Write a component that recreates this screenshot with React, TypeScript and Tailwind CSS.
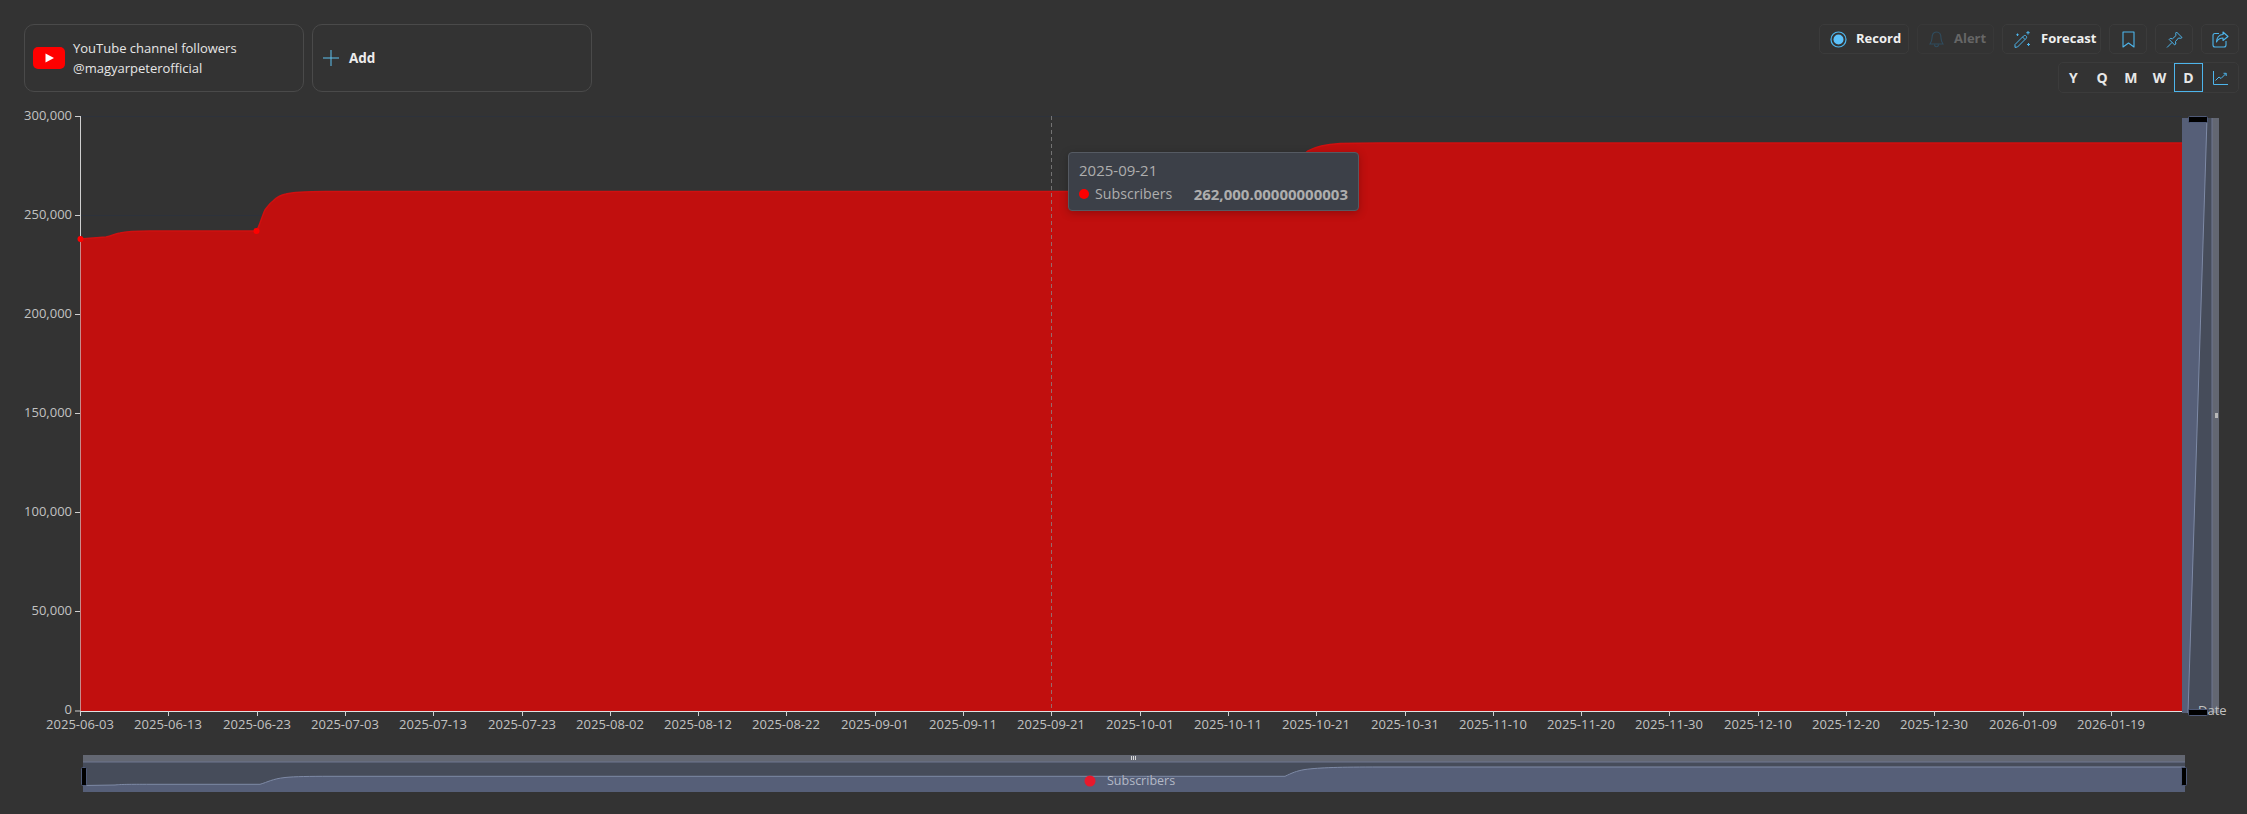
import React from "react";

const FONT = "font-['Open_Sans','Noto_Sans',sans-serif]";
const ticks = ["2025-06-03","2025-06-13","2025-06-23","2025-07-03","2025-07-13","2025-07-23","2025-08-02","2025-08-12","2025-08-22","2025-09-01","2025-09-11","2025-09-21","2025-10-01","2025-10-11","2025-10-21","2025-10-31","2025-11-10","2025-11-20","2025-11-30","2025-12-10","2025-12-20","2025-12-30","2026-01-09","2026-01-19"];
const yTicks: [string, number][] = [["300,000",116],["250,000",215],["200,000",314],["150,000",413],["100,000",512],["50,000",611],["0",710.5]];

const AREA = "M80 239 L106 237 C112 236 114 234 120 233 C126 231.5 134 231 150 231 L256.5 231 C260 225 262 216 265 210 C268 206 270 203 273 201 C277 197 281 195 286 194 C293 192 305 191.4 325 191.4 L1285 191.4 C1290 184 1293 175 1297 168 C1300 160 1303 154 1308 151 C1315 147 1325 144.5 1340 143.6 C1350 143.2 1365 143 1380 143 L2182 143";

function IconBtn({ w, children }: { w: string; children: React.ReactNode }) {
  return <div className={`flex h-[30px] items-center justify-center rounded-[5px] border border-[#3b3b3b] ${w}`}>{children}</div>;
}

function Period({ label, active }: { label: string; active?: boolean }) {
  return <div className={`flex h-[29px] w-[28.75px] items-center justify-center text-[14px] font-bold text-[#e8e8e8] ${active ? "border border-[#4db5ec]" : ""}`}>{label}</div>;
}

export default function App() {
  return (
    <div className={`relative h-[814px] w-[2247px] overflow-hidden bg-[#333333] ${FONT}`}>
      <div className="flex h-[96px] items-start justify-between pl-[24px] pr-[8px] pt-[24px]">
        <div className="flex gap-[8px]">
          <div className="flex h-[68px] w-[280px] items-center gap-[8px] rounded-[10px] border border-[#4a4a4a] pl-[8px]">
            <svg width="32" height="22" viewBox="0 0 32 22"><rect width="32" height="22" rx="5" fill="#ff0000" /><path d="M12.5 6.5 L21 11 L12.5 15.5 Z" fill="#fff" /></svg>
            <div className="text-[13px] leading-[20px] text-[#e6e6e6]">
              <div>YouTube channel followers</div>
              <div>@magyarpeterofficial</div>
            </div>
          </div>
          <div className="flex h-[68px] w-[280px] items-center gap-[10px] rounded-[10px] border border-[#4a4a4a] pl-[10px]">
            <svg width="16" height="16" viewBox="0 0 16 16" stroke="#5fc2f0" strokeWidth="1"><path d="M8 0 V16 M0 8 H16" /></svg>
            <span className="text-[13.5px] font-bold leading-[18px] text-[#ececec]">Add</span>
          </div>
        </div>
        <div className="flex flex-col items-end gap-[8px]">
          <div className="flex gap-[8px]">
            <div className="flex h-[30px] w-[90px] items-center gap-[9px] rounded-[5px] border border-[#3b3b3b] pl-[10px] text-[13px] font-bold text-[#f0f0f0]">
              <svg width="17" height="17" viewBox="0 0 17 17"><circle cx="8.5" cy="8.5" r="7.5" fill="none" stroke="#4db5ec" strokeWidth="1.2" /><circle cx="8.5" cy="8.5" r="5" fill="#5cc2fb" /></svg>
              Record
            </div>
            <div className="flex h-[30px] w-[77px] items-center gap-[10px] rounded-[5px] border border-[#383838] pl-[11px] text-[13px] font-bold text-[#666666]">
              <svg width="15" height="17" viewBox="0 0 15 17" fill="none" stroke="#2f4c5e" strokeWidth="1.1"><path d="M7.5 1 C4 1 3 4 3 7 C3 10 2 11.5 1 13 H14 C13 11.5 12 10 12 7 C12 4 11 1 7.5 1 Z" /><path d="M5.5 13.5 C5.5 16.5 9.5 16.5 9.5 13.5" /></svg>
              Alert
            </div>
            <div className="flex h-[30px] w-[99px] items-center gap-[10px] rounded-[5px] border border-[#3b3b3b] pl-[11px] text-[13px] font-bold text-[#f0f0f0]">
              <svg width="17" height="17" viewBox="0 0 17 17" fill="none" stroke="#4db5ec" strokeWidth="1"><path d="M1 13.5 L9.5 5 C10.3 4.3 11.6 4.3 12.2 5 C12.9 5.7 12.8 6.8 12 7.5 L3.5 16 L1 16.4 Z" /><path d="M8.5 6 L11 8.5" /><path d="M14 0 V3.5 M12.3 1.7 H15.7 M3.5 2.5 V5 M2.3 3.7 H4.7 M14.5 12 V15 M13 13.5 H16" /></svg>
              Forecast
            </div>
            <IconBtn w="w-[38px]">
              <svg width="13" height="17" viewBox="0 0 13 17" fill="none" stroke="#4db5ec" strokeWidth="1.1"><path d="M1 1 H12 V16 L6.5 12 L1 16 Z" strokeLinejoin="round" /></svg>
            </IconBtn>
            <IconBtn w="w-[38px]">
              <svg width="17" height="17" viewBox="0 0 17 17" fill="none" stroke="#4db5ec" strokeWidth="1"><path d="M10.5 1 L16 6.5 L14.8 7.3 L12.5 7 L9.5 10.5 L9.8 13 L8.7 14 L3.2 8.5 L4.2 7.4 L6.5 7.8 L10 4.5 L9.7 2.2 Z" strokeLinejoin="round" /><path d="M6 11.5 L1 16.5" /></svg>
            </IconBtn>
            <IconBtn w="w-[38px]">
              <svg width="17" height="17" viewBox="0 0 17 17" fill="none" stroke="#4db5ec" strokeWidth="1.1"><path d="M7 2.5 H3 C1.8 2.5 1 3.3 1 4.5 V14 C1 15.2 1.8 16 3 16 H12 C13.2 16 14 15.2 14 14 V10" /><path d="M11 1 L16 5.5 L11 9.5 V7 C8 7 6 8 4.5 11 C4.5 7 7 3.5 11 3.5 Z" strokeLinejoin="round" /></svg>
            </IconBtn>
          </div>
          <div className="flex h-[31px] w-[181px] items-center rounded-[5px] border border-[#3b3b3b]">
            <Period label="Y" />
            <Period label="Q" />
            <Period label="M" />
            <Period label="W" />
            <Period label="D" active />
            <div className="flex flex-1 items-center justify-center">
              <svg width="15" height="14" viewBox="0 0 15 14" fill="none" stroke="#4db5ec" strokeWidth="1"><path d="M0.5 0 V13.5 H15" /><path d="M2.5 9.5 L6 6 L8 7.5 L13 2.5 M10.5 2.3 H13.2 V5" /></svg>
            </div>
          </div>
        </div>
      </div>

      <svg className="block" width="2247" height="718" viewBox="0 96 2247 718">
        <g stroke="#2d323b" strokeWidth="1">
          <path d="M80 116.5 H2182" />
          <path d="M80 215.5 H2182" />
        </g>
        <path d={`${AREA} L2182 711 L80 711 Z`} fill="#c10f0e" />
        <path d={AREA} fill="none" stroke="#d01010" strokeWidth="1.5" />
        <path d="M80.5 116 V239" stroke="#d0d0d0" strokeWidth="1" />
        <path d="M80.5 239 V711" stroke="#c88a8a" strokeWidth="1" />
        <path d="M75 116.5 H80 M75 215.5 H80 M75 314.5 H80 M75 413.5 H80 M75 512.5 H80 M75 611.5 H80 M75 711 H80" stroke="#d0d0d0" strokeWidth="1" />
        <path d="M80 711.5 H2182" stroke="#e0e0e0" strokeWidth="1" />
        <circle cx="80.5" cy="239" r="3" fill="#ff0000" />
        <circle cx="256.5" cy="231" r="3" fill="#ff0000" />
        <path d="M1051.5 116 V711" stroke="#8a8a8a" strokeOpacity="0.75" strokeWidth="1" strokeDasharray="4 3" />
        <g className="text-[13px]" fill="#c2c2c2">
          {yTicks.map(([t, y]) => (
            <text key={t} x="72" y={y + 3.5} textAnchor="end">{t}</text>
          ))}
          {ticks.map((t, i) => {
            const x = Math.round(80 + i * 88.3);
            return (
              <g key={t}>
                <path d={`M${x + 0.5} 711 V716`} stroke="#d0d0d0" strokeWidth="1" />
                <text x={x} y="729" textAnchor="middle">{t}</text>
              </g>
            );
          })}
        </g>

        {/* vertical data zoom */}
        <rect x="2212" y="118" width="7" height="595" fill="#636772" />
        <rect x="2182" y="118" width="30" height="595" fill="#464c5a" />
        <path d="M2182 118 H2207 L2188 713 H2182 Z" fill="#565f78" />
        <path d="M2207 118 L2188 713" stroke="#7e8aa6" strokeWidth="1" fill="none" />
        <rect x="2211.5" y="118" width="1" height="595" fill="#6f7690" />
        <rect x="2215" y="413" width="3" height="5" fill="#b8b8b8" />
        <text className="text-[13px]" x="2198" y="715" fill="#c2c2c2">Date</text>
        <rect x="2188.5" y="116.5" width="19" height="6" rx="1" fill="#000" stroke="#4f5a78" />
        <rect x="2188.5" y="709.5" width="19" height="6" rx="1" fill="#000" stroke="#4f5a78" />

        {/* horizontal data zoom */}
        <rect x="83" y="755" width="2102" height="7" fill="#636772" />
        <rect x="83" y="762" width="2102" height="30" fill="#464c5a" />
        <path d="M83 785.5 L115 785 C120 784.3 130 784.3 150 784.3 L260 784.3 C268 782 272 779 285 777.5 C295 776.5 310 776.3 330 776.3 L1285 776.3 C1292 773 1296 771 1305 769.5 C1320 767.5 1340 767 1380 767 L2185 767 V792 H83 Z" fill="#565f78" />
        <path d="M83 785.5 L115 785 C120 784.3 130 784.3 150 784.3 L260 784.3 C268 782 272 779 285 777.5 C295 776.5 310 776.3 330 776.3 L1285 776.3 C1292 773 1296 771 1305 769.5 C1320 767.5 1340 767 1380 767 L2185 767" fill="none" stroke="#7e8aa6" strokeWidth="1" />
        <rect x="83" y="761.5" width="2102" height="1" fill="#6f7690" />
        <path d="M1131.5 756 V760 M1133.5 756 V760 M1135.5 756 V760" stroke="#d8d8d8" strokeWidth="1" />
        <rect x="81.5" y="767.5" width="5" height="18" rx="1" fill="#000" stroke="#4f5a78" />
        <rect x="2181.5" y="767.5" width="5" height="18" rx="1" fill="#000" stroke="#4f5a78" />
        <circle cx="1090" cy="781" r="5.5" fill="#e8192c" />
        <text className="text-[12.5px]" x="1107" y="785" fill="#b4b9c6">Subscribers</text>
      </svg>

      <div className="absolute left-[1068px] top-[152px] flex h-[59px] w-[291px] flex-col justify-between rounded-[4px] border border-[#555a62] bg-[#3c4048] px-[10px] pb-[6px] pt-[7px] text-[#aeaeae] shadow-[0_2px_8px_rgba(0,0,0,0.25)]">
        <div className="text-[15px] leading-[20px]">2025-09-21</div>
        <div className="flex items-center leading-[20px]">
          <span className="mr-[6px] h-[10px] w-[10px] rounded-full bg-[#ff0000]" />
          <span className="text-[14.2px]">Subscribers</span>
          <span className="ml-auto text-[15px] font-bold">262,000.00000000003</span>
        </div>
      </div>
    </div>
  );
}
